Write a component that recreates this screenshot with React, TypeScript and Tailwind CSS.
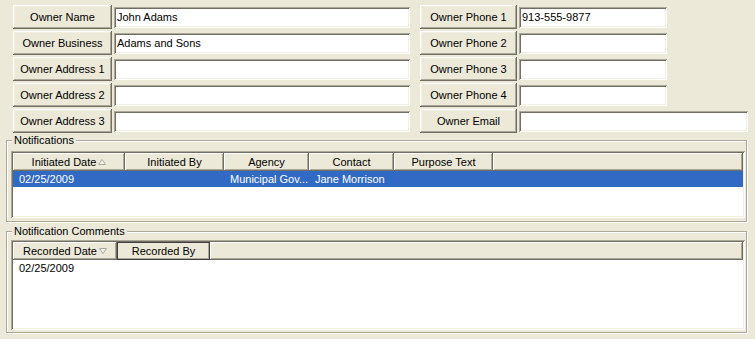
import React from "react";

const raised =
  "shadow-[inset_-1px_-1px_0_#716f64,inset_1px_1px_0_#ffffff,inset_-2px_-2px_0_#aca899,inset_2px_2px_0_#f1efe2]";
const sunken =
  "shadow-[inset_1px_1px_0_#aca899,inset_-1px_-1px_0_#ffffff,inset_2px_2px_0_#716f64,inset_-2px_-2px_0_#f1efe2]";

function Button({ label, w }: { label: string; w: string }) {
  return (
    <div className={`${w} h-[24px] shrink-0 bg-[#ece9d8] ${raised} flex items-center justify-center`}>
      {label}
    </div>
  );
}

function Field({ value, w }: { value?: string; w: string }) {
  return (
    <div className={`${w} h-[21px] shrink-0 bg-white ${sunken} flex items-center px-[3px]`}>
      {value}
    </div>
  );
}

function SortArrow({ down }: { down?: boolean }) {
  return (
    <svg width="8" height="6" viewBox="0 0 8 6" className="ml-[2px]">
      <path
        d={down ? "M0.5 0.5 H7.5 L4 5.5 Z" : "M0.5 5.5 H7.5 L4 0.5 Z"}
        fill="#f4f3ee"
        stroke="#aca899"
        strokeWidth="1"
      />
    </svg>
  );
}

function HeaderCell({
  label,
  w,
  sort,
  pressed,
}: {
  label?: string;
  w: string;
  sort?: "up" | "down";
  pressed?: boolean;
}) {
  const border = pressed
    ? "shadow-[inset_1px_1px_0_#404040,inset_-1px_-1px_0_#404040,inset_-2px_-2px_0_#aca899]"
    : "shadow-[inset_-1px_-1px_0_#716f64,inset_1px_1px_0_#ffffff,inset_-2px_-2px_0_#aca899]";
  return (
    <div className={`${w} h-full bg-[#ece9d8] ${border} flex items-center justify-center`}>
      {label}
      {sort && <SortArrow down={sort === "down"} />}
    </div>
  );
}

export default function App() {
  const left = [
    { label: "Owner Name", value: "John Adams" },
    { label: "Owner Business", value: "Adams and Sons" },
    { label: "Owner Address 1" },
    { label: "Owner Address 2" },
    { label: "Owner Address 3" },
  ];
  const right = [
    { label: "Owner Phone 1", value: "913-555-9877" },
    { label: "Owner Phone 2" },
    { label: "Owner Phone 3" },
    { label: "Owner Phone 4" },
    { label: "Owner Email", wide: true },
  ];

  return (
    <div className="w-[755px] h-[339px] bg-[#ece9d8] text-[11px] leading-[13px] text-black font-['Liberation_Sans',sans-serif] pt-[5px] overflow-hidden">
      <div className="flex flex-col gap-[2px]">
        {left.map((l, i) => (
          <div key={l.label} className="flex items-center pl-[13px]">
            <Button label={l.label} w="w-[99px]" />
            <div className="w-[2px]" />
            <Field value={l.value} w="w-[296px]" />
            <div className="w-[10px]" />
            <Button label={right[i].label} w="w-[97px]" />
            <div className="w-[2px]" />
            <Field value={right[i].value} w={right[i].wide ? "w-[229px]" : "w-[148px]"} />
          </div>
        ))}
      </div>

      <fieldset className="ml-[6px] mt-[1px] w-[741px] border border-[#aca899] shadow-[1px_1px_0_#ffffff,inset_1px_1px_0_#ffffff] pl-[4px] pr-[1px] pt-[4px] pb-[3px]">
        <legend className="ml-[1px] px-[2px] bg-[#ece9d8] leading-[13px]">Notifications</legend>
        <div className={`h-[67px] bg-white ${sunken} p-[2px] flex flex-col`}>
          <div className="h-[18px] flex shrink-0">
            <HeaderCell label="Initiated Date" w="w-[112px]" sort="up" />
            <HeaderCell label="Initiated By" w="w-[99px]" />
            <HeaderCell label="Agency" w="w-[85px]" />
            <HeaderCell label="Contact" w="w-[85px]" />
            <HeaderCell label="Purpose Text" w="w-[99px]" />
            <HeaderCell w="flex-1" />
          </div>
          <div className="h-[16px] bg-[#316ac5] text-white flex items-center">
            <div className="w-[112px] pl-[6px]">02/25/2009</div>
            <div className="w-[99px]" />
            <div className="w-[85px] pl-[6px] whitespace-nowrap">Municipal Gov...</div>
            <div className="w-[85px] pl-[6px] whitespace-nowrap">Jane Morrison</div>
          </div>
        </div>
      </fieldset>

      <fieldset className="ml-[6px] mt-[3px] w-[741px] border border-[#aca899] shadow-[1px_1px_0_#ffffff,inset_1px_1px_0_#ffffff] pl-[4px] pr-[1px] pt-[2px] pb-[2px]">
        <legend className="ml-[1px] px-[2px] bg-[#ece9d8] leading-[13px]">Notification Comments</legend>
        <div className={`h-[90px] bg-white ${sunken} p-[2px] flex flex-col`}>
          <div className="h-[18px] flex shrink-0">
            <HeaderCell label="Recorded Date" w="w-[104px]" sort="down" />
            <HeaderCell label="Recorded By" w="w-[93px]" pressed />
            <HeaderCell w="flex-1" />
          </div>
          <div className="h-[16px] flex items-center">
            <div className="pl-[6px]">02/25/2009</div>
          </div>
        </div>
      </fieldset>
    </div>
  );
}
